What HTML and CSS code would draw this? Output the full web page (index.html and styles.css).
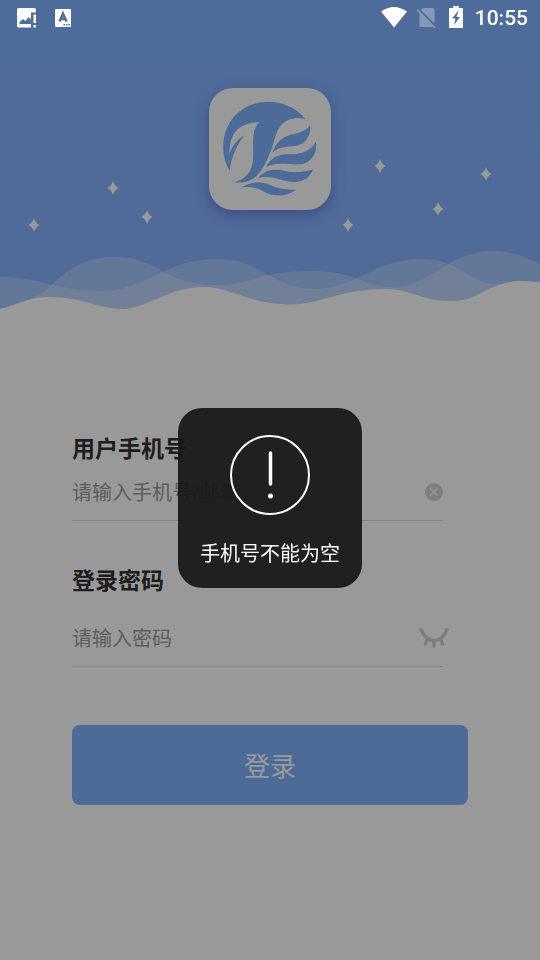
FILE: index.html
```html
<!DOCTYPE html>
<html lang="zh-CN">
<head>
<meta charset="utf-8">
<meta name="viewport" content="width=device-width, initial-scale=1">
<title>登录</title>
<link rel="stylesheet" href="styles.css">
</head>
<body>
<div class="statusbar">
  <div class="status-group">
    <svg class="status-icon picture" viewBox="0 0 22 22" aria-hidden="true">
      <path fill="#fff" d="M2.500 1H18a2 2 0 0 1 2 2v2.500h-5V20.500H2.500A1.500 1.500 0 0 1 1 19V2.500A1.500 1.500 0 0 1 2.500 1z"/>
      <path fill="#506e9a" d="M3.500 17v-2l3.500-3 2.500 2 3-4L16 14v3z"/>
      <path fill="#fff" d="M17.500 7.500H20v8.500h-2.500zM17.500 18H20v2.500h-2.500z"/>
    </svg>
    <svg class="status-icon" viewBox="0 0 22 22" aria-hidden="true">
      <rect x="3" y="2" width="16" height="18" rx="1" fill="#fff"/>
      <path fill="none" stroke="#506e9a" stroke-width="2.500" d="M7.500 14.500L11 6.500l3.500 8M8.500 12h5"/>
      <path fill="#506e9a" d="M11.500 17h1.500v1.500h-1.500zM14 17h1.500v1.500H14zM16.500 17H18v1.500h-1.500z"/>
    </svg>
  </div>
  <div class="status-group">
    <svg class="wifi" viewBox="0 0 28 24" aria-hidden="true"><path fill="#fff" d="M1 5.500Q14-3.500 27 5.500L14 21.500z"/></svg>
    <svg class="status-icon" viewBox="1 0 22 22" aria-hidden="true">
      <path fill="#8799b8" d="M7 1h10a1.500 1.500 0 0 1 1.500 1.500V16.500L5 3zM3.500 5L18 19.500a1 1 0 0 1-1 .5H5a1.500 1.500 0 0 1-1.500-1.500z"/>
      <path stroke="#8799b8" stroke-width="1.500" d="M1 2.500L19.500 21"/>
    </svg>
    <svg class="battery" viewBox="0 0 16 24" aria-hidden="true">
      <path fill="#fff" d="M5 0h6v2h4v20H1V2h4z"/>
      <path fill="#506e9a" d="M10 5L4 12.500h3.500L6 19l6-8H8.500L10.500 5z"/>
    </svg>
    <time class="clock">10:55</time>
  </div>
</div>

<main class="page">
  <header class="hero">
    <svg class="scene" viewBox="0 0 540 310" aria-hidden="true">
      <defs>
        <linearGradient id="sky" x1="0" y1="0" x2="0" y2="1">
          <stop offset="0" stop-color="#82b4ff"/>
          <stop offset="1" stop-color="#88b3ff"/>
        </linearGradient>
        <path id="star" d="M0-7Q1.500-2 5.500 0Q1.500 2 0 7Q-1.500 2-5.500 0Q-1.500-2 0-7z"/>
      </defs>
      <rect width="540" height="310" fill="url(#sky)"/>
      <g fill="#fff">
        <use href="#star" x="34" y="225"/><use href="#star" x="113" y="188"/>
        <use href="#star" x="147" y="217"/><use href="#star" x="348" y="225"/>
        <use href="#star" x="380" y="166"/><use href="#star" x="438" y="209"/>
        <use href="#star" x="486" y="174"/>
      </g>
      <g fill="#fff" fill-opacity=".26">
        <path d="M0 277C42 278 60 291 101 291C147 291 164 259 216 259C263 259 272 289 315 289C355 289 375 259 421 259C462 259 466 284 500 284L500 310H0z"/>
        <path d="M30 299C58 289 65 257 115 257C160 257 162 285 217 285C252 285 259 271 310 271C360 271 360 287 394 287C431 287 447 251 493 251C510 251 526 257 540 264V310H30z"/>
      </g>
      <path fill="#fff" d="M0 309C20 304 28 297 50 297C82 297 98 309 124 309C144 309 170 287 203 287C231 287 247 304 292 304.500C319 304.500 340 289 386 289C411 289 420 301 451 301C483 301 485 281 523 281L540 282V311H0z"/>
    </svg>
    <div class="logo">
      <svg viewBox="42 38 366 366" role="img" aria-label="logo">
        <g fill="#80b3ff">
          <path d="M104 286C70 232 82 152 130 111C190 61 284 73 331 131C300 122 268 132 253 157C238 180 239 202 222 240C202 288 180 327 118 321C155 310 172 287 174 250C177 215 166 165 193 141C150 141 120 158 110 190C103 208 104 222 103 237C113 208 130 191 149 180C122 213 110 245 104 286z"/>
          <path d="M232 233C244 193 270 181 300 175C324 170 337 162 345 149C349 177 335 205 305 211C277 216 252 211 232 233z"/>
          <path d="M213 276C225 250 246 236 285 237C325 237 350 222 363 199C368 236 346 264 315 267C280 270 245 257 213 276z"/>
          <path d="M190 307C208 284 236 278 270 287C300 294 330 290 354 282C346 306 322 323 290 320C255 316 232 300 190 307z"/>
          <path d="M141 336C162 321 192 317 220 327C245 339 274 345 303 343C286 357 262 362 240 360C203 356 196 330 141 336z"/>
        </g>
      </svg>
    </div>
  </header>

  <form class="form">
    <div class="field">
      <label for="phone">用户手机号</label>
      <div class="row">
        <input id="phone" type="text" placeholder="请输入手机号/邮箱">
        <button class="icon-button" type="button" aria-label="清除">
          <svg class="clear" viewBox="0 0 18 18"><circle cx="9" cy="9" r="9" fill="#d3d4d6"/><path stroke="#fff" stroke-width="1.200" d="M5 5l8 8M13 5l-8 8"/></svg>
        </button>
      </div>
    </div>
    <div class="field password">
      <label for="password">登录密码</label>
      <div class="row">
        <input id="password" type="password" placeholder="请输入密码">
        <button class="icon-button eye-button" type="button" aria-label="显示密码">
          <svg class="eye" viewBox="0 0 30 22"><path fill="none" stroke="#d0d0d0" stroke-width="3.500" stroke-linecap="round" d="M2 2.500C6 11.500 10 13.500 15 13.500S24 11.500 28 2.500M8 13l-1.500 4M15 14v5M22 13l1.500 4"/></svg>
        </button>
      </div>
    </div>
    <button class="submit" type="submit">登录</button>
  </form>
</main>

<div class="overlay">
  <div class="toast" role="alert">
    <svg class="toast-icon" viewBox="0 0 80 80" aria-hidden="true">
      <circle cx="40" cy="40" r="39" fill="none" stroke="#fff" stroke-width="2"/>
      <path stroke="#fff" stroke-width="3.500" stroke-linecap="round" d="M40.500 18v31"/>
      <circle cx="40.500" cy="61" r="2.500" fill="#fff"/>
    </svg>
    <p class="toast-text">手机号不能为空</p>
  </div>
</div>
</body>
</html>
```

FILE: styles.css
```css
* { box-sizing: border-box; }

body {
  margin: 0;
  min-height: 100vh;
  background: #fff;
  font-family: "Noto Sans CJK SC", sans-serif;
  color: #333;
}

svg { display: block; }

button {
  padding: 0;
  border: 0;
  background: none;
  font: inherit;
}

.statusbar {
  position: fixed;
  inset: 0 0 auto;
  z-index: 3;
  display: flex;
  justify-content: space-between;
  align-items: center;
  height: 36px;
  padding: 0 12px 0 16px;
}

.status-group {
  display: flex;
  align-items: center;
  gap: 9px;
}

.status-icon { width: 22px; height: 22px; }
.picture { margin-right: 5px; }
.wifi { width: 28px; height: 24px; }
.battery { width: 16px; height: 24px; }

.clock {
  margin-left: 2px;
  color: #fff;
  font: 500 21px/36px Roboto, sans-serif;
}

.hero { position: relative; }

.scene { width: 100%; height: auto; }

.logo {
  position: absolute;
  top: 88px;
  left: calc(50% - 61px);
  width: 122px;
  border-radius: 24px;
  background: #fff;
  box-shadow: 0 5px 14px rgba(70, 80, 200, 0.5);
}

.form { padding: 120px 72px 40px; }

.field { margin-right: 25px; }

.field label {
  display: block;
  font-size: 23px;
  font-weight: 700;
  line-height: 34px;
}

.row {
  display: flex;
  align-items: center;
  height: 57px;
  padding-bottom: 1px;
  border-bottom: 1px solid #ddd;
}

.row input {
  flex: 1;
  min-width: 0;
  height: 100%;
  padding: 0;
  border: 0;
  outline: 0;
  background: none;
  font: 20px/30px "Noto Sans CJK SC", sans-serif;
  color: #333;
}

.row input::placeholder { color: #9c9c9c; opacity: 1; }

.password { margin-top: 41px; }
.password .row { margin-top: 14px; }

.clear { width: 18px; height: 18px; }
.eye { width: 30px; height: 22px; }
.eye-button { margin-right: -6px; }

.submit {
  display: block;
  width: 100%;
  height: 80px;
  margin-top: 58px;
  padding-bottom: 2px;
  border-radius: 8px;
  background: #7fb2ff;
  color: #fff;
  font-size: 26px;
}

.overlay {
  position: fixed;
  inset: 0;
  z-index: 2;
  display: flex;
  align-items: center;
  justify-content: center;
  padding-top: 36px;
  background: rgba(0, 0, 0, 0.4);
}

.toast {
  display: flex;
  flex-direction: column;
  align-items: center;
  gap: 23px;
  padding: 27px 22px 20px;
  border-radius: 24px;
  background: rgba(23, 23, 23, 0.93);
}

.toast-icon { width: 80px; height: 80px; }

.toast-text {
  margin: 0;
  color: #fff;
  font-size: 20px;
  line-height: 30px;
}
```
